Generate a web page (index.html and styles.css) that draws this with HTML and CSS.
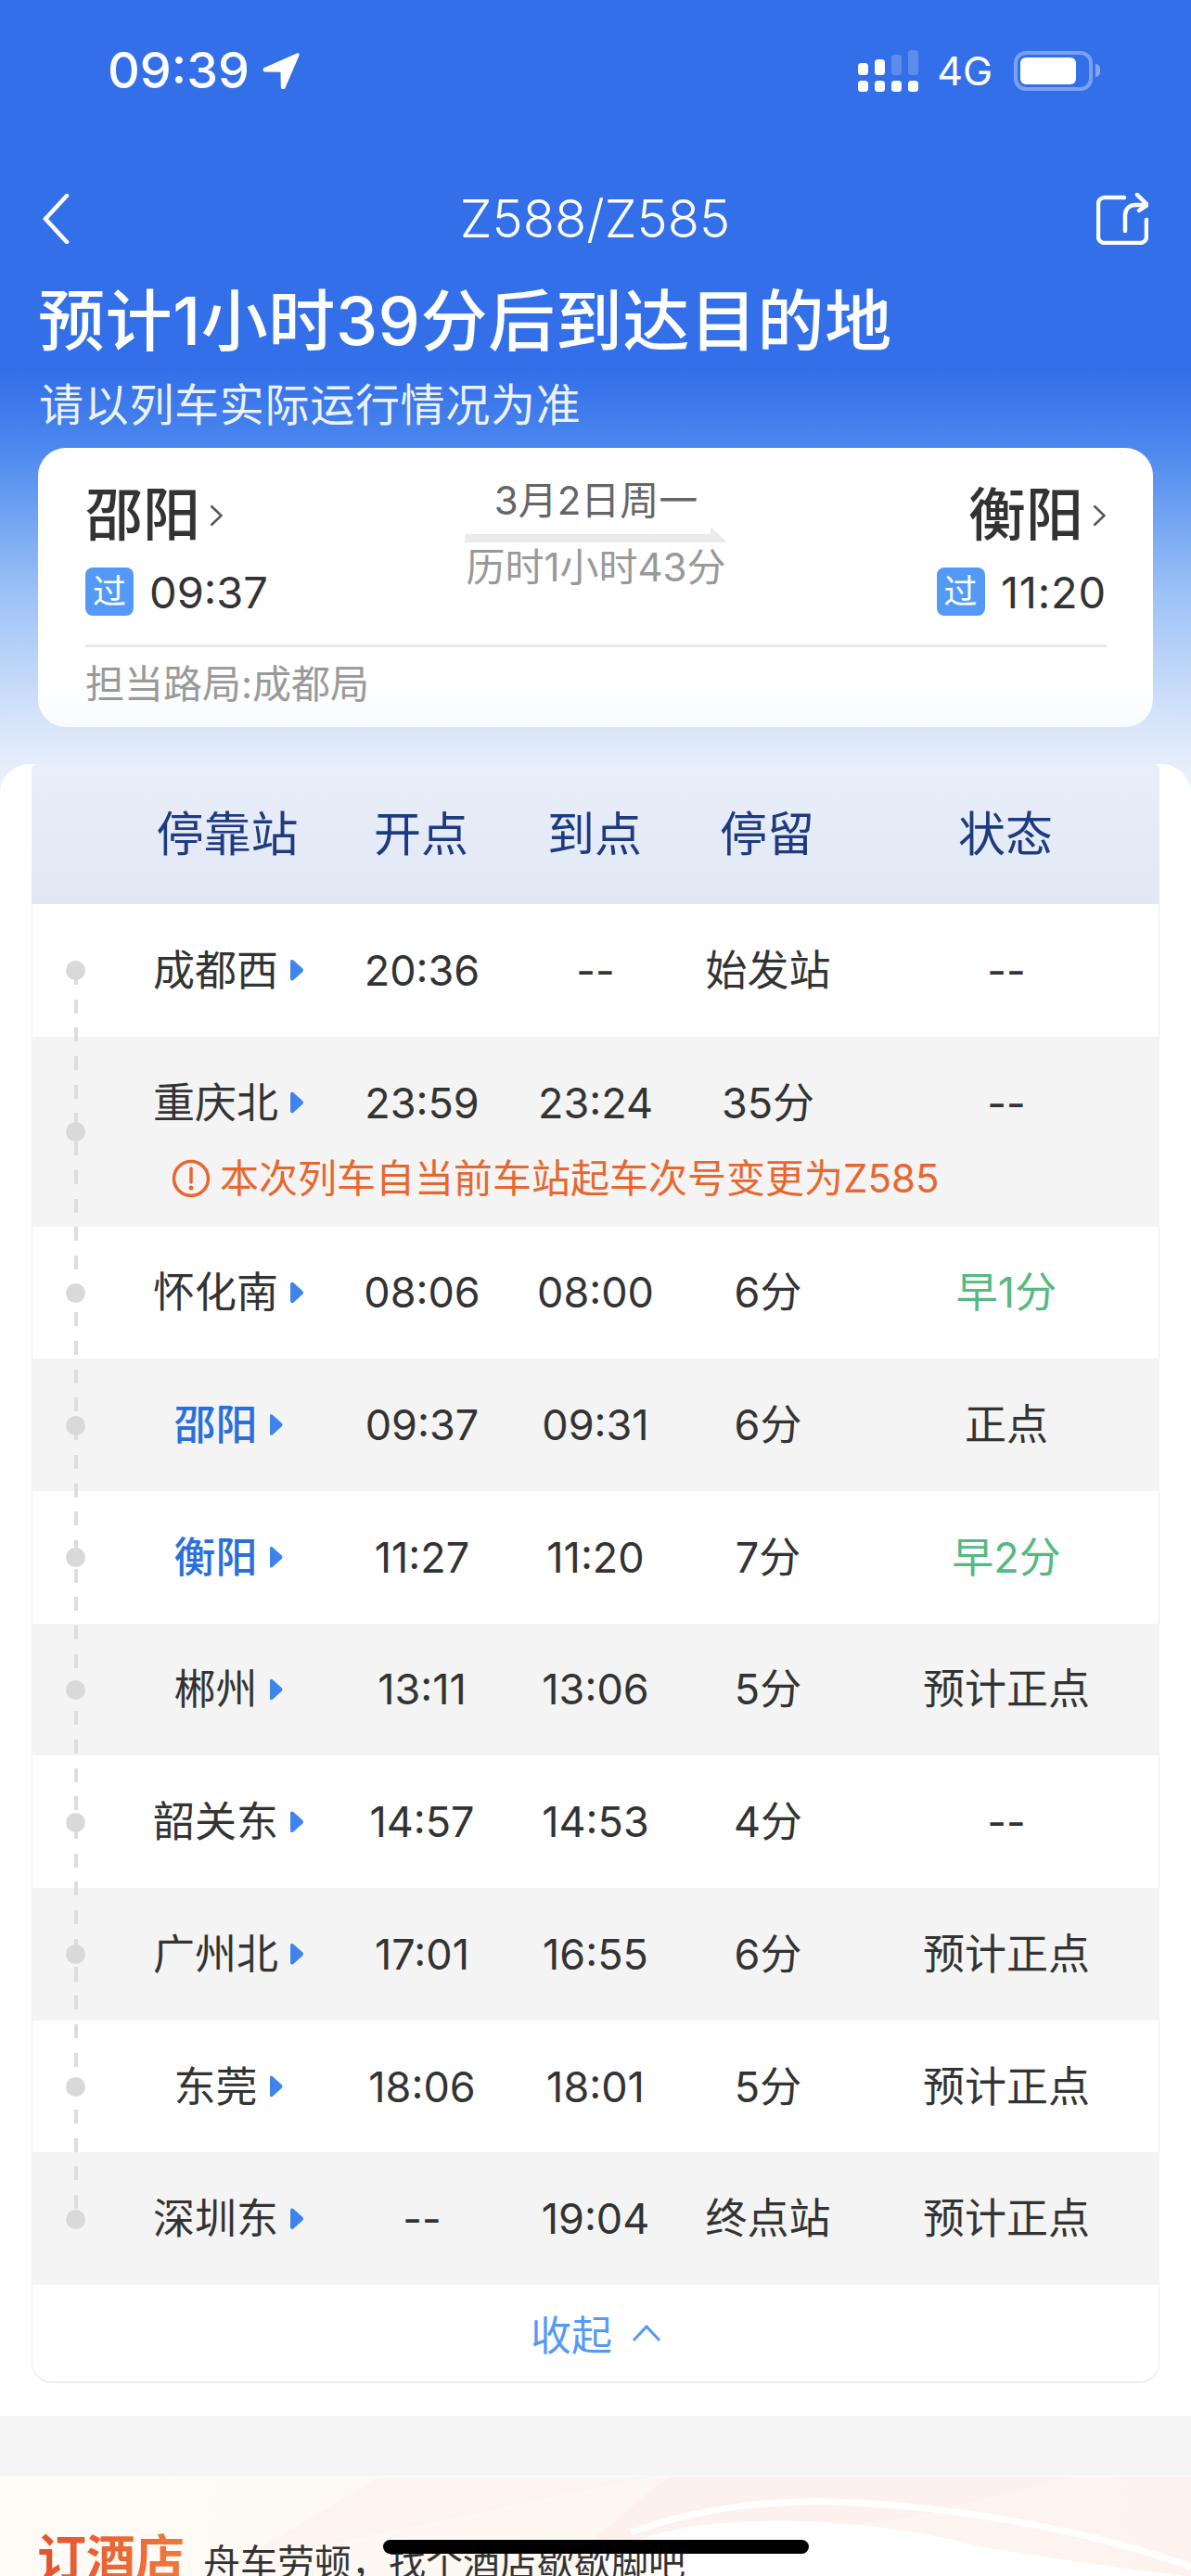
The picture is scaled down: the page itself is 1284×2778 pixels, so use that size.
FILE: index.html
```html
<!DOCTYPE html>
<html lang="zh-CN">
<head>
    <meta charset="UTF-8">
    <meta name="viewport" content="width=device-width, initial-scale=1.0">
    <title>Z588/Z585</title>
    <link rel="stylesheet" href="styles.css">
</head>
<body>
    <div class="page">
        <header class="top">
            <div class="status-bar">
                <div class="status-left">
                    <span class="clock">09:39</span>
                    <svg class="loc-icon" viewBox="0 0 40 40"><path d="M37 1.500 2 17c-2.500 1.200-1.600 4.500 1 4.500l16.500.3.300 16.200c0 2.600 3.500 3.300 4.600.9L39.500 3.800C40.200 2 38.800.700 37 1.500z" fill="#fff"/></svg>
                </div>
                <div class="status-right">
                    <svg class="signal" viewBox="0 0 65 45">
                        <g fill="#fff">
                            <rect x="0" y="14" width="11" height="13" rx="3.500"/>
                            <rect x="18" y="10" width="11" height="17" rx="3.500"/>
                            <rect x="0" y="33" width="11" height="12" rx="3.500"/>
                            <rect x="18" y="33" width="11" height="12" rx="3.500"/>
                            <rect x="36" y="33" width="11" height="12" rx="3.500"/>
                            <rect x="54" y="33" width="11" height="12" rx="3.500"/>
                        </g>
                        <g fill="#fff" opacity=".2">
                            <rect x="36" y="5" width="11" height="22" rx="3.500"/>
                            <rect x="54" y="0" width="11" height="27" rx="3.500"/>
                        </g>
                    </svg>
                    <span class="net">4G</span>
                    <div class="battery"><div class="battery-fill"></div></div>
                    <div class="battery-nub"></div>
                </div>
            </div>
            <div class="nav">
                <svg class="nav-back" viewBox="0 0 30 54"><path d="M27 2 4 27l23 25" fill="none" stroke="#fff" stroke-width="4.500" stroke-linecap="round"/></svg>
                <div class="nav-title">Z588/Z585</div>
                <svg class="nav-share" viewBox="0 0 56 56"><path d="M30 5H9C5 5 2 8 2 12v35c0 4 3 7 7 7h38c4 0 7-3 7-7V29" fill="none" stroke="#fff" stroke-width="4.500" stroke-linecap="round"/><path d="M31 41V24c0-7 5-11 11-11h13M44 2l11 11-9 6" fill="none" stroke="#fff" stroke-width="4.500" stroke-linecap="round" stroke-linejoin="round"/></svg>
            </div>
            <h1>预计1小时39分后到达目的地</h1>
            <p class="sub">请以列车实际运行情况为准</p>
            <div class="trip-card">
                <div class="trip-main">
                    <div class="stop">
                        <div class="stop-name">邵阳<svg class="chev" viewBox="0 0 14 24"><path d="M1.500 1.500 12.500 12l-11 10.500" fill="none" stroke="#555" stroke-width="2.500"/></svg></div>
                        <div class="stop-time"><span class="pass-tag">过</span>09:37</div>
                    </div>
                    <div class="trip-mid">
                        <div class="trip-date">3月2日周一</div>
                        <svg class="trip-arrow" viewBox="0 0 283 17" preserveAspectRatio="none"><path d="M0 8h265V0l18 17H0z" fill="#ebebeb"/></svg>
                        <div class="trip-dur">历时1小时43分</div>
                    </div>
                    <div class="stop stop-end">
                        <div class="stop-name">衡阳<svg class="chev" viewBox="0 0 14 24"><path d="M1.500 1.500 12.500 12l-11 10.500" fill="none" stroke="#555" stroke-width="2.500"/></svg></div>
                        <div class="stop-time"><span class="pass-tag">过</span>11:20</div>
                    </div>
                </div>
                <div class="trip-bureau">担当路局:成都局</div>
            </div>
        </header>

        <section class="sheet">
            <div class="table">
                <div class="row-head">
                    <div>停靠站</div><div>开点</div><div>到点</div><div>停留</div><div>状态</div>
                </div>
                <div class="rows">
                    <div class="track"></div>
                    <div class="row">
                        <i class="dot"></i>
                        <div class="cells"><div class="name">成都西<b class="tri"></b></div><div>20:36</div><div>--</div><div>始发站</div><div>--</div></div>
                    </div>
                    <div class="row alt row-warn">
                        <i class="dot"></i>
                        <div class="cells"><div class="name">重庆北<b class="tri"></b></div><div>23:59</div><div>23:24</div><div>35分</div><div>--</div></div>
                        <div class="warn">
                            <svg class="warn-icon" viewBox="0 0 42 42"><circle cx="21" cy="21" r="18.500" fill="none" stroke="#e8672f" stroke-width="3.500"/><path d="M21 10v15" stroke="#e8672f" stroke-width="3.500" stroke-linecap="round"/><circle cx="21" cy="31" r="2.500" fill="#e8672f"/></svg>
                            本次列车自当前车站起车次号变更为Z585
                        </div>
                    </div>
                    <div class="row">
                        <i class="dot"></i>
                        <div class="cells"><div class="name">怀化南<b class="tri"></b></div><div>08:06</div><div>08:00</div><div>6分</div><div class="early">早1分</div></div>
                    </div>
                    <div class="row alt">
                        <i class="dot"></i>
                        <div class="cells"><div class="name on-trip">邵阳<b class="tri"></b></div><div>09:37</div><div>09:31</div><div>6分</div><div>正点</div></div>
                    </div>
                    <div class="row">
                        <i class="dot"></i>
                        <div class="cells"><div class="name on-trip">衡阳<b class="tri"></b></div><div>11:27</div><div>11:20</div><div>7分</div><div class="early">早2分</div></div>
                    </div>
                    <div class="row alt">
                        <i class="dot"></i>
                        <div class="cells"><div class="name">郴州<b class="tri"></b></div><div>13:11</div><div>13:06</div><div>5分</div><div>预计正点</div></div>
                    </div>
                    <div class="row">
                        <i class="dot"></i>
                        <div class="cells"><div class="name">韶关东<b class="tri"></b></div><div>14:57</div><div>14:53</div><div>4分</div><div>--</div></div>
                    </div>
                    <div class="row alt">
                        <i class="dot"></i>
                        <div class="cells"><div class="name">广州北<b class="tri"></b></div><div>17:01</div><div>16:55</div><div>6分</div><div>预计正点</div></div>
                    </div>
                    <div class="row">
                        <i class="dot"></i>
                        <div class="cells"><div class="name">东莞<b class="tri"></b></div><div>18:06</div><div>18:01</div><div>5分</div><div>预计正点</div></div>
                    </div>
                    <div class="row alt">
                        <i class="dot"></i>
                        <div class="cells"><div class="name">深圳东<b class="tri"></b></div><div>--</div><div>19:04</div><div>终点站</div><div>预计正点</div></div>
                    </div>
                </div>
                <div class="collapse">收起<svg class="collapse-icon" viewBox="0 0 32 20"><path d="M2 18 16 3l14 15" fill="none" stroke="#5599f7" stroke-width="3"/></svg></div>
            </div>
        </section>

        <div class="gap"></div>

        <section class="hotel">
            <svg class="hotel-swoosh" viewBox="0 0 1284 108" preserveAspectRatio="none">
                <path d="M410 0H700L250 95Z" fill="#fcf4ef"/>
                <path d="M720 0H1150L1000 40 600 100Z" fill="#fcf1ec"/>
                <path d="M600 108C660 75 710 55 778 50 880 42 980 55 1065 77 1150 90 1220 100 1284 108Z" fill="#fff"/>
                <path d="M680 60C750 35 820 25 900 27 1040 32 1180 60 1284 97" fill="none" stroke="#fff" stroke-width="7"/>
            </svg>
            <div class="hotel-text"><span class="hotel-title">订酒店</span><span class="hotel-desc">舟车劳顿，找个酒店歇歇脚吧</span></div>
        </section>

        <div class="home-bar"></div>
    </div>
</body>
</html>
```

FILE: styles.css
```css
* {
    box-sizing: border-box;
}

html, body {
    margin: 0;
    padding: 0;
}

body {
    font-family: Inter, "Noto Sans CJK SC", sans-serif;
    color: #333;
    background: #fff;
}

.page {
    position: relative;
    width: 1284px;
    height: 2778px;
    overflow: hidden;
    background: #f5f5f5;
}

/* header */
.top {
    height: 854px;
    padding-top: 53px;
    background: linear-gradient(180deg, #336fe8 0, #336fe8 400px, #4a87ee 480px, #9cc2f6 640px, #dbe7fa 790px, #eef3fc 854px);
}

.status-bar {
    display: flex;
    justify-content: space-between;
    height: 46px;
    padding: 0 98px 0 116px;
    color: #fff;
}

.status-left, .status-right {
    display: flex;
    align-items: center;
}

.clock {
    font-size: 54px;
    font-weight: 500;
    line-height: 46px;
}

.loc-icon {
    width: 40px;
    height: 40px;
    margin-left: 14px;
}

.signal {
    width: 65px;
    height: 45px;
}

.net {
    margin-left: 20px;
    font-size: 43px;
    line-height: 46px;
}

.battery {
    width: 85px;
    height: 43px;
    margin-left: 23px;
    padding: 3px;
    border: 4px solid rgba(255, 255, 255, 0.35);
    border-radius: 13px;
}

.battery-fill {
    width: 60px;
    height: 29px;
    background: #fff;
    border-radius: 6px;
}

.battery-nub {
    width: 5px;
    height: 14px;
    margin-left: 3px;
    background: rgba(255, 255, 255, 0.4);
    border-radius: 0 7px 7px 0;
}

.nav {
    display: grid;
    grid-template-columns: 1fr auto 1fr;
    align-items: center;
    height: 56px;
    margin-top: 109px;
    padding: 0 46px 0 45px;
}

.nav-back {
    width: 30px;
    height: 54px;
}

.nav-title {
    font-size: 56px;
    font-weight: 300;
    line-height: 56px;
    color: #fff;
}

.nav-share {
    justify-self: end;
    width: 56px;
    height: 56px;
}

h1 {
    margin: 37px 0 0 41px;
    font-size: 72px;
    font-weight: 500;
    line-height: 90px;
    letter-spacing: 0.6px;
    color: #fff;
}

.sub {
    margin: 18px 0 0 42px;
    font-size: 48px;
    line-height: 56px;
    letter-spacing: 0.7px;
    color: rgba(255, 255, 255, 0.92);
}

.trip-card {
    display: flex;
    flex-direction: column;
    width: 1202px;
    height: 301px;
    margin: 18px 0 0 41px;
    padding: 27px 50px 0 51px;
    background: linear-gradient(180deg, #fff 80%, #f8fbff 100%);
    border-radius: 30px;
}

.trip-main {
    display: grid;
    grid-template-columns: 1fr 283px 1fr;
    height: 188px;
    border-bottom: 3px solid #e8e8e8;
}

.stop-name {
    display: flex;
    align-items: center;
    height: 70px;
    margin-top: 11px;
    font-size: 62px;
    font-weight: 500;
    line-height: 70px;
}

.chev {
    width: 14px;
    height: 24px;
    margin-left: 10px;
}

.stop-time {
    display: flex;
    align-items: center;
    height: 52px;
    margin-top: 21px;
    font-size: 47px;
}

.stop-end .stop-name, .stop-end .stop-time {
    justify-content: flex-end;
}

.stop-end .stop-name {
    padding-right: 1px;
}

.stop-end .stop-time {
    letter-spacing: 0.8px;
}

.pass-tag {
    width: 52px;
    height: 52px;
    margin-right: 17px;
    font-size: 36px;
    line-height: 52px;
    text-align: center;
    color: #fff;
    background: #5599f7;
    border-radius: 8px;
}

.trip-mid {
    text-align: center;
}

.trip-date {
    margin-top: 6px;
    font-size: 42px;
    line-height: 48px;
    color: #666;
}

.trip-arrow {
    display: block;
    width: 283px;
    height: 17px;
    margin-top: 4px;
}

.trip-dur {
    margin-top: 4px;
    font-size: 42px;
    line-height: 46px;
    color: #999;
}

.trip-bureau {
    margin-top: 15px;
    font-size: 42px;
    line-height: 50px;
    color: #999;
}

/* timetable */
.sheet {
    height: 1781px;
    margin-top: -30px;
    position: relative;
    padding: 0 34px;
    background: #fff;
    border-radius: 32px 32px 0 0;
}

.row-head, .cells {
    display: grid;
    grid-template-columns: 232px 186px 188px 184px 330px;
    align-items: center;
    text-align: center;
}

.row-head {
    height: 151px;
    padding: 0 0 8px 95px;
    font-size: 51px;
    color: #1e3a80;
    background: linear-gradient(180deg, #e9eff9, #e0e8f4);
    border-radius: 6px 6px 0 0;
}

.rows {
    position: relative;
}

.track {
    position: absolute;
    z-index: 1;
    top: 72px;
    left: 46px;
    width: 4px;
    height: 1347px;
    background: repeating-linear-gradient(180deg, #ddd 0, #ddd 15px, transparent 15px, transparent 30.7px);
}

.row {
    position: relative;
    padding: 48.85px 0;
    background: #fff;
    border: solid #ececec;
    border-width: 0 1px;
}

.row.alt {
    background: #f4f4f4;
    border-color: #f4f4f4;
}

.row-warn {
    padding-bottom: 31px;
}

.cells {
    height: 45px;
    padding-left: 95px;
    font-size: 45px;
    line-height: 45px;
}

.dot {
    position: absolute;
    z-index: 2;
    top: 50%;
    left: 36px;
    width: 21px;
    height: 21px;
    margin-top: -10px;
    background: #d9d9d9;
    border-radius: 50%;
}

.name {
    display: flex;
    align-items: center;
    justify-content: center;
}

.on-trip {
    font-weight: 500;
    color: #2a6fdb;
}

.tri {
    width: 14px;
    height: 24px;
    margin-left: 13px;
    background: #3f83ec;
    clip-path: path("M0 3Q0 0 3 1L13 10Q15 12 13 14L3 23Q0 24 0 21Z");
}

.early {
    color: #55b981;
}

.warn {
    display: flex;
    align-items: center;
    height: 42px;
    margin: 38px 0 0 150px;
    font-size: 42px;
    line-height: 42px;
    color: #e8672f;
}

.warn-icon {
    width: 42px;
    height: 42px;
    margin-right: 10px;
}

.collapse {
    display: flex;
    align-items: center;
    justify-content: center;
    height: 106px;
    padding-left: 2px;
    font-size: 44px;
    color: #5599f7;
    border: solid #ececec;
    border-width: 0 1px 2px;
    border-radius: 0 0 22px 22px;
}

.collapse-icon {
    width: 34px;
    height: 20px;
    margin-left: 20px;
}

.gap {
    height: 65px;
}

.hotel {
    position: relative;
    height: 108px;
    padding: 58px 0 0 40px;
    background: linear-gradient(100deg, #fefbf7, #fdf6f1 60%, #fdf3ee);
    border-top: 1px solid #fbfbfb;
}

.hotel-swoosh {
    position: absolute;
    top: 0;
    left: 0;
    width: 1284px;
    height: 108px;
}

.hotel-text {
    position: relative;
    display: flex;
    align-items: baseline;
}

.hotel-title {
    font-size: 53px;
    font-weight: 700;
    line-height: 60px;
    color: transparent;
    background: linear-gradient(90deg, #e4522f, #f0793a);
    background-clip: text;
    -webkit-background-clip: text;
}

.hotel-desc {
    margin-left: 20px;
    font-size: 40px;
    line-height: 60px;
    color: #333;
}

.home-bar {
    position: absolute;
    left: 413px;
    top: 2739px;
    width: 459px;
    height: 15px;
    background: #000;
    border-radius: 8px;
}
```
